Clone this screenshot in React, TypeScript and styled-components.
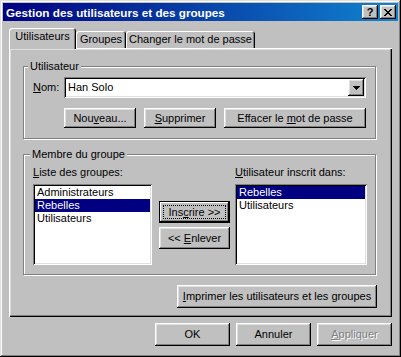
import * as React from 'react';
import styled, { createGlobalStyle, css } from 'styled-components';

const GlobalStyle = createGlobalStyle`
  html, body {
    margin: 0;
    padding: 0;
    background: #c0c0c0;
  }
  body {
    font-family: "Liberation Sans", Arial, sans-serif;
    font-size: 11px;
    color: #000;
  }
`;

const raised = css`
  box-shadow: inset -1px -1px #000, inset 1px 1px #fff, inset -2px -2px #808080,
    inset 2px 2px #dfdfdf;
`;

const sunken = css`
  box-shadow: inset 1px 1px #808080, inset -1px -1px #fff, inset 2px 2px #000,
    inset -2px -2px #dfdfdf;
`;

const Window = styled.div`
  box-sizing: border-box;
  width: 401px;
  height: 357px;
  padding: 3px;
  background: #c0c0c0;
  box-shadow: inset -1px -1px #000, inset 1px 1px #dfdfdf, inset -2px -2px #808080,
    inset 2px 2px #fff;
  display: flex;
  flex-direction: column;
`;

const TitleBar = styled.div`
  height: 18px;
  display: flex;
  align-items: center;
  padding: 0 2px 0 3px;
  background: linear-gradient(to right, #000080, #1084d0);
  color: #fff;
  font-weight: bold;
  font-size: 11.7px;
  line-height: 13px;
  white-space: nowrap;
`;

const TitleText = styled.span`
  flex: 1;
`;

const CaptionButton = styled.div`
  box-sizing: border-box;
  width: 16px;
  height: 14px;
  margin-left: 2px;
  background: #c0c0c0;
  color: #000;
  display: flex;
  align-items: center;
  justify-content: center;
  font-size: 11px;
  font-weight: bold;
  ${raised}
`;

const Body = styled.div`
  flex: 1;
  display: flex;
  flex-direction: column;
  padding: 7px 6px 0 6px;
`;

const TabRow = styled.div`
  height: 20px;
  display: flex;
  align-items: flex-end;
`;

const Tab = styled.div<{ $active?: boolean; $w: number }>`
  box-sizing: border-box;
  position: relative;
  z-index: ${(p) => (p.$active ? 1 : 0)};
  width: ${(p) => p.$w}px;
  height: ${(p) => (p.$active ? 21 : 17)}px;
  margin-bottom: ${(p) => (p.$active ? -1 : 0)}px;
  padding-top: 2px;
  line-height: 13px;
  text-align: center;
  white-space: nowrap;
  background: #c0c0c0;
  border-radius: 3px 3px 0 0;
  box-shadow: inset 1px 1px #fff, inset -1px 0 #000, inset -2px 0 #808080;
`;

const Panel = styled.div`
  box-sizing: border-box;
  width: 383px;
  height: 269px;
  padding: 18px 15px 9px 14px;
  background: #c0c0c0;
  box-shadow: inset 1px 1px #fff, inset -1px -1px #000, inset -2px -2px #808080,
    inset 2px 2px #dfdfdf;
  display: flex;
  flex-direction: column;
  align-items: flex-start;
`;

const Frame = styled.div<{ $h: number; $top?: number }>`
  box-sizing: border-box;
  width: 353px;
  height: ${(p) => p.$h}px;
  margin-top: ${(p) => p.$top ?? 0}px;
  border: 1px solid #808080;
  box-shadow: inset 1px 1px #fff, 1px 1px #fff;
  display: flex;
  flex-direction: column;
`;

const Caption = styled.div<{ $indent: number }>`
  align-self: flex-start;
  height: 13px;
  line-height: 13px;
  margin: -7px 0 0 ${(p) => p.$indent}px;
  padding: 0 2px;
  background: #c0c0c0;
`;

const NameRow = styled.div`
  display: flex;
  align-items: center;
  margin-top: 4px;
  padding-left: 9px;
`;

const FieldLabel = styled.span`
  width: 31px;
  line-height: 13px;
`;

const Combo = styled.div`
  box-sizing: border-box;
  width: 302px;
  height: 21px;
  padding: 2px;
  background: #fff;
  display: flex;
  ${sunken}
`;

const ComboText = styled.div`
  flex: 1;
  padding-left: 2px;
  line-height: 17px;
`;

const ComboButton = styled.div`
  box-sizing: border-box;
  width: 16px;
  height: 17px;
  background: #c0c0c0;
  display: flex;
  align-items: center;
  justify-content: center;
  ${raised}
`;

const ActionRow = styled.div`
  display: grid;
  grid-template-columns: 72px 72px 142px;
  column-gap: 8px;
  margin-top: 10px;
  padding-left: 40px;
`;

const Button = styled.button<{ $w?: number; $h?: number; $default?: boolean }>`
  box-sizing: border-box;
  position: relative;
  width: ${(p) => (p.$w ? `${p.$w}px` : 'auto')};
  height: ${(p) => p.$h ?? 23}px;
  padding: 0;
  border: none;
  background: #c0c0c0;
  font: inherit;
  line-height: 13px;
  color: #000;
  white-space: nowrap;
  display: flex;
  align-items: center;
  justify-content: center;
  ${(p) =>
    p.$default
      ? css`
          box-shadow: inset 0 0 0 1px #000, inset -2px -2px #000, inset 2px 2px #fff,
            inset -3px -3px #808080;
          &::after {
            content: '';
            position: absolute;
            inset: 4px;
            border: 1px dotted #000;
          }
        `
      : raised}
  &:disabled {
    color: #808080;
    text-shadow: 1px 1px #fff;
  }
`;

const Key = styled.span`
  text-decoration: underline;
  text-underline-offset: 1px;
`;

const Columns = styled.div`
  display: flex;
  margin-top: 5px;
  padding-left: 9px;
`;

const Column = styled.div<{ $w: number; $gap?: number }>`
  width: ${(p) => p.$w}px;
  margin-left: ${(p) => p.$gap ?? 0}px;
  display: flex;
  flex-direction: column;
`;

const MoveButtons = styled.div`
  width: 71px;
  margin-left: 7px;
  padding-top: 35px;
  display: flex;
  flex-direction: column;
  gap: 4px;
`;

const ListLabel = styled.div`
  height: 13px;
  line-height: 13px;
  margin-bottom: 5px;
  white-space: nowrap;
`;

const ListBox = styled.ul`
  box-sizing: border-box;
  height: 81px;
  margin: 0;
  padding: 2px;
  list-style: none;
  background: #fff;
  ${sunken}
`;

const ListItem = styled.li<{ $selected?: boolean }>`
  height: 13px;
  line-height: 13px;
  padding-left: 2px;
  white-space: nowrap;
  background: ${(p) => (p.$selected ? '#000080' : 'transparent')};
  color: ${(p) => (p.$selected ? '#fff' : '#000')};
`;

const PrintButton = styled(Button)`
  align-self: flex-end;
  margin-top: 10px;
`;

const Footer = styled.div`
  display: flex;
  justify-content: flex-end;
  gap: 6px;
  margin-top: 6px;
`;

const groups = ['Administrateurs', 'Rebelles', 'Utilisateurs'];
const memberOf = ['Rebelles', 'Utilisateurs'];

const App: React.FC = () => (
  <>
    <GlobalStyle />
    <Window>
      <TitleBar>
        <TitleText>Gestion des utilisateurs et des groupes</TitleText>
        <CaptionButton>?</CaptionButton>
        <CaptionButton>
          <svg width="8" height="7" viewBox="0 0 8 7" shapeRendering="crispEdges">
            <path
              d="M0 0h2v1h1v1h2v-1h1v-1h2v1h-1v1h-1v1h-1v1h1v1h1v1h1v1h-2v-1h-1v-1h-2v1h-1v1h-2v-1h1v-1h1v-1h1v-1h-1v-1h-1v-1h-1z"
              fill="#000"
            />
          </svg>
        </CaptionButton>
      </TitleBar>
      <Body>
        <TabRow>
          <Tab $active $w={67}>
            Utilisateurs
          </Tab>
          <Tab $w={50}>Groupes</Tab>
          <Tab $w={129}>Changer le mot de passe</Tab>
        </TabRow>
        <Panel>
          <Frame $h={73}>
            <Caption $indent={4}>Utilisateur</Caption>
            <NameRow>
              <FieldLabel>
                <Key>N</Key>om:
              </FieldLabel>
              <Combo>
                <ComboText>Han Solo</ComboText>
                <ComboButton>
                  <svg width="7" height="4" viewBox="0 0 7 4" shapeRendering="crispEdges">
                    <path d="M0 0h7v1h-1v1h-1v1h-1v1h-1v-1h-1v-1h-1v-1h-1z" fill="#000" />
                  </svg>
                </ComboButton>
              </Combo>
            </NameRow>
            <ActionRow>
              <Button $h={20}>
                Nou<Key>v</Key>eau...
              </Button>
              <Button $h={20}>
                <Key>S</Key>upprimer
              </Button>
              <Button $h={20}>
                Effacer le&nbsp;<Key>m</Key>ot de passe
              </Button>
            </ActionRow>
          </Frame>
          <Frame $h={121} $top={15}>
            <Caption $indent={6}>Membre du groupe</Caption>
            <Columns>
              <Column $w={119}>
                <ListLabel>
                  <Key>L</Key>iste des groupes:
                </ListLabel>
                <ListBox>
                  {groups.map((g) => (
                    <ListItem key={g} $selected={g === 'Rebelles'}>
                      {g}
                    </ListItem>
                  ))}
                </ListBox>
              </Column>
              <MoveButtons>
                <Button $h={22} $default>
                  Ins<Key>c</Key>rire &gt;&gt;
                </Button>
                <Button $h={22}>
                  &lt;&lt;&nbsp;<Key>E</Key>nlever
                </Button>
              </MoveButtons>
              <Column $w={132} $gap={5}>
                <ListLabel>
                  <Key>U</Key>tilisateur inscrit dans:
                </ListLabel>
                <ListBox>
                  {memberOf.map((g) => (
                    <ListItem key={g} $selected={g === 'Rebelles'}>
                      {g}
                    </ListItem>
                  ))}
                </ListBox>
              </Column>
            </Columns>
          </Frame>
          <PrintButton $w={200}>
            <Key>I</Key>mprimer les utilisateurs et les groupes
          </PrintButton>
        </Panel>
        <Footer>
          <Button $w={75}>OK</Button>
          <Button $w={75}>Annuler</Button>
          <Button $w={75} disabled>
            <Key>A</Key>ppliquer
          </Button>
        </Footer>
      </Body>
    </Window>
  </>
);

export default App;
